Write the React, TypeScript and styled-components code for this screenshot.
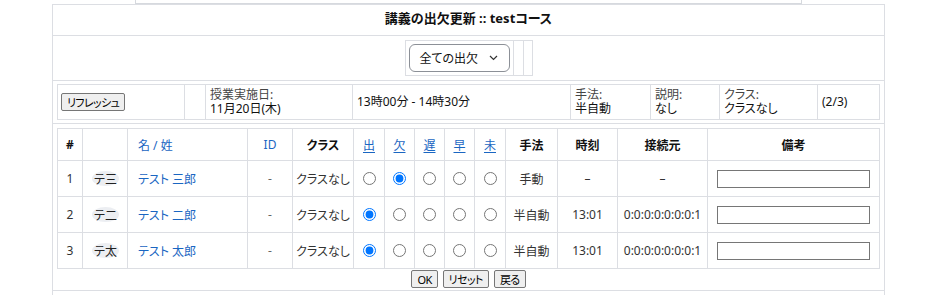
import React from "react";
import styled, { createGlobalStyle } from "styled-components";

const GlobalStyle = createGlobalStyle`
  * {
    box-sizing: border-box;
    font-feature-settings: "palt" 1;
  }
  body {
    margin: 0;
    background: #fff;
    font-family: "Noto Sans", "Noto Sans CJK JP", sans-serif;
    font-size: 12px;
    color: #222;
  }
`;

const LINE = "#dcdee3";
const LINK = "#1a66c2";

const Stub = styled.div`
  margin-left: 135px;
  width: 667px;
  height: 4px;
  border: 1px solid #d6d9de;
  border-top: none;
`;

const Panel = styled.div`
  margin-left: 52px;
  width: 833px;
  border: 1px solid ${LINE};
  border-bottom: none;
`;

const Section = styled.div<{ $h: number; $pad?: string }>`
  height: ${(p) => p.$h}px;
  padding: ${(p) => p.$pad || "0"};
  border-bottom: 1px solid ${LINE};
`;

const Title = styled(Section)`
  display: flex;
  align-items: center;
  justify-content: center;
  font-size: 13px;
  font-weight: bold;
  color: #111;
  padding-bottom: 5px;
`;

const FilterRow = styled(Section)`
  display: flex;
  justify-content: center;
  align-items: flex-start;
`;

const FilterGroup = styled.div`
  display: flex;
  height: 36px;
  border: 1px solid ${LINE};
`;

const FilterCell = styled.div<{ $w?: number; $last?: boolean }>`
  width: ${(p) => (p.$w ? `${p.$w}px` : "auto")};
  padding: ${(p) => (p.$w ? "0" : "3px")};
  border-right: ${(p) => (p.$last ? "none" : `1px solid ${LINE}`)};
`;

const FakeSelect = styled.div`
  width: 101px;
  height: 28px;
  border: 1px solid #8c9097;
  border-radius: 6px;
  display: flex;
  align-items: center;
  justify-content: space-between;
  padding: 0 11px 0 10px;
  font-size: 12px;
  color: #111;
`;

const Grid = styled.div<{ $cols: string; $rows: string }>`
  display: grid;
  grid-template-columns: ${(p) => p.$cols};
  grid-template-rows: ${(p) => p.$rows};
  width: 823px;
  border-left: 1px solid ${LINE};
  border-top: 1px solid ${LINE};
`;

const Cell = styled.div<{ $left?: boolean; $pad?: number }>`
  display: flex;
  align-items: center;
  justify-content: ${(p) => (p.$left ? "flex-start" : "center")};
  padding-left: ${(p) => (p.$left ? p.$pad ?? 4 : 0)}px;
  border-right: 1px solid ${LINE};
  border-bottom: 1px solid ${LINE};
  color: #333;
  white-space: nowrap;
`;

const HeadCell = styled(Cell)`
  font-weight: bold;
  color: #111;
`;

const HeadLink = styled.a<{ $under?: boolean }>`
  color: ${LINK};
  font-weight: normal;
  text-decoration: ${(p) => (p.$under ? "underline" : "none")};
  text-underline-offset: 2px;
`;

const InfoCell = styled(Cell)`
  flex-direction: column;
  align-items: flex-start;
  justify-content: center;
`;

const Label = styled.div`
  line-height: 14px;
  height: 14px;
  color: #444;
`;

const Value = styled.div`
  line-height: 14px;
  height: 14px;
  color: #111;
`;

const NameLink = styled.a`
  color: ${LINK};
  text-decoration: none;
`;

const Avatar = styled.span`
  display: inline-flex;
  align-items: center;
  height: 15px;
  padding: 0 2px;
  border-radius: 50%;
  background: #eceef2;
  color: #222;
`;

const Dim = styled.span`
  color: #666;
`;

const Radio = styled.input`
  margin: 0;
  width: 13px;
  height: 13px;
`;

const Note = styled.input`
  width: 153px;
  height: 18px;
  border: 1px solid #767676;
  border-radius: 0;
  padding: 1px 2px;
`;

const Btn = styled.button`
  height: 18px;
  padding: 0 5px;
  font-family: inherit;
  font-size: 11px;
  letter-spacing: -0.6px;
  line-height: 1;
  color: #000;
  background: #efefef;
  border: 1px solid #767676;
  border-radius: 2px;
`;

const Actions = styled.div`
  display: flex;
  justify-content: center;
  gap: 5px;
  margin-top: 1px;
`;

const infoCols = "127px 21px 147px 218px 80px 69px 98px 62px";
const mainCols =
  "25px 45px 120px 45px 61px 31px 30px 30px 30px 31px 52px 60px 90px 172px";

const students = [
  { short: "テ三", name: "テスト 三郎", status: 1, method: "手動", time: "–", from: "–" },
  { short: "テ二", name: "テスト 二郎", status: 0, method: "半自動", time: "13:01", from: "0:0:0:0:0:0:0:1" },
  { short: "テ太", name: "テスト 太郎", status: 0, method: "半自動", time: "13:01", from: "0:0:0:0:0:0:0:1" },
];

const statuses = ["出", "欠", "遅", "早", "未"];

function Chevron() {
  return (
    <svg width="9" height="6" viewBox="0 0 9 6" fill="none">
      <path d="M1 1l3.5 3.5L8 1" stroke="#333" strokeWidth="1.2" />
    </svg>
  );
}

export default function App() {
  return (
    <>
      <GlobalStyle />
      <Stub />
      <Panel>
        <Title $h={31}>講義の出欠更新 :: testコース</Title>
        <FilterRow $h={45} $pad="4px 0 0">
          <FilterGroup>
            <FilterCell>
              <FakeSelect>
                全ての出欠
                <Chevron />
              </FakeSelect>
            </FilterCell>
            <FilterCell $w={10} />
            <FilterCell $w={8} $last />
          </FilterGroup>
        </FilterRow>
        <Section $h={43} $pad="3px 4px">
          <Grid $cols={infoCols} $rows="35px">
            <Cell $left $pad={3}>
              <Btn>リフレッシュ</Btn>
            </Cell>
            <Cell />
            <InfoCell $left>
              <Label>授業実施日:</Label>
              <Value>11月20日(木)</Value>
            </InfoCell>
            <Cell $left>
              <Value>13時00分 - 14時30分</Value>
            </Cell>
            <InfoCell $left>
              <Label>手法:</Label>
              <Value>半自動</Value>
            </InfoCell>
            <InfoCell $left>
              <Label>説明:</Label>
              <Value>なし</Value>
            </InfoCell>
            <InfoCell $left>
              <Label>クラス:</Label>
              <Value>クラスなし</Value>
            </InfoCell>
            <Cell $left>
              <Value>(2/3)</Value>
            </Cell>
          </Grid>
        </Section>
        <Section $h={167} $pad="4px 4px 0">
          <Grid $cols={mainCols} $rows="32px repeat(3, 36px)">
            <HeadCell>#</HeadCell>
            <HeadCell />
            <HeadCell $left $pad={10}>
              <HeadLink>名 / 姓</HeadLink>
            </HeadCell>
            <HeadCell>
              <HeadLink>ID</HeadLink>
            </HeadCell>
            <HeadCell>クラス</HeadCell>
            {statuses.map((s) => (
              <HeadCell key={s}>
                <HeadLink $under>{s}</HeadLink>
              </HeadCell>
            ))}
            <HeadCell>手法</HeadCell>
            <HeadCell>時刻</HeadCell>
            <HeadCell>接続元</HeadCell>
            <HeadCell>備考</HeadCell>

            {students.map((st, i) => (
              <React.Fragment key={st.name}>
                <Cell>{i + 1}</Cell>
                <Cell $left $pad={9}>
                  <Avatar>{st.short}</Avatar>
                </Cell>
                <Cell $left $pad={10}>
                  <NameLink>{st.name}</NameLink>
                </Cell>
                <Cell>
                  <Dim>-</Dim>
                </Cell>
                <Cell>クラスなし</Cell>
                {statuses.map((s, j) => (
                  <Cell key={s}>
                    <Radio type="radio" name={`st${i}`} defaultChecked={st.status === j} />
                  </Cell>
                ))}
                <Cell>{st.method}</Cell>
                <Cell>{st.time}</Cell>
                <Cell>{st.from}</Cell>
                <Cell>
                  <Note type="text" />
                </Cell>
              </React.Fragment>
            ))}
          </Grid>
          <Actions>
            <Btn>OK</Btn>
            <Btn>リセット</Btn>
            <Btn>戻る</Btn>
          </Actions>
        </Section>
        <Section $h={30} />
      </Panel>
    </>
  );
}
